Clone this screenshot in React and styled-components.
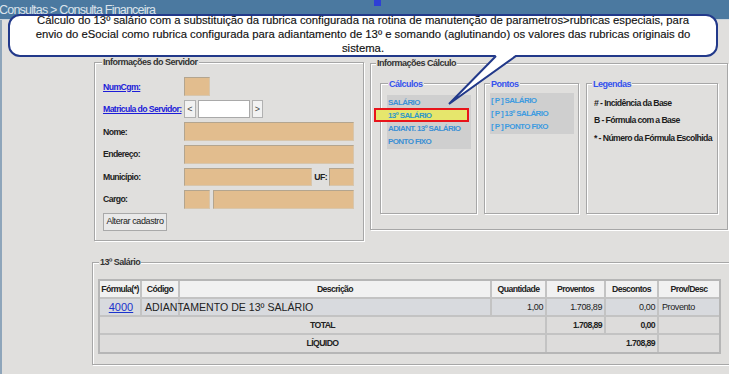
import React from "react";
import styled, { createGlobalStyle } from "styled-components";

const SANS = `"Liberation Sans", Arial, sans-serif`;
const BG = "#e0dfdd";

const Global = createGlobalStyle`
  html, body { margin: 0; padding: 0; background: ${BG}; overflow: hidden; }
  body { width: 729px; height: 374px; font-family: ${SANS}; }
  *, *::before, *::after { box-sizing: border-box; }
`;

const Page = styled.div`
  position: relative;
  width: 729px;
  height: 374px;
  overflow: hidden;
  background: ${BG};
`;

const TopBar = styled.header`
  height: 20px;
  background: #4b79a0;
  border-bottom: 1px solid #c9d2da;
  display: grid;
  grid-template-columns: 374px 7px;
  align-items: start;
`;

const Crumb = styled.div`
  margin-left: -1px;
  padding-top: 2px;
  white-space: nowrap;
  color: #dce4ec;
  font: 12.5px/16px ${SANS};
  letter-spacing: -0.8px;
`;

const Marker = styled.span`
  display: block;
  width: 7px;
  height: 6px;
  background: #2e3fd6;
`;

const Main = styled.main`
  border-left: 2px solid #8ea5ba;
  height: 354px;
  padding: 36px 0 0 90px;
`;

const TopRow = styled.div`
  display: flex;
  align-items: flex-start;
  gap: 6px;
  margin-left: 2px;
`;

const Group = styled.fieldset`
  margin: 0;
  padding: 0;
  min-width: 0;
  width: ${(p) => p.$w}px;
  ${(p) => (p.$mt ? `margin-top: ${p.$mt}px;` : "")}
  border: 1px solid #a7a7a7;
  box-shadow: 1px 1px 0 #fff, inset 1px 1px 0 #fff;
`;

const Legend = styled.legend`
  margin-left: ${(p) => p.$ml}px;
  padding: 0 1px;
  background: ${BG};
  font: bold 9px/12px ${SANS};
  letter-spacing: -0.5px;
  color: ${(p) => (p.$blue ? "#3552ee" : "#333")};
  white-space: nowrap;
`;

const ServerBody = styled.div`
  padding: 9px 9px 9px 8px;
  display: grid;
  grid-template-columns: 81px 1fr;
  grid-auto-rows: 19px;
  row-gap: 3.5px;
  align-items: center;
`;

const Label = styled.span`
  font: bold 8.7px/12px ${SANS};
  letter-spacing: -0.6px;
  color: ${(p) => (p.$link ? "#1c1cd8" : "#222")};
  text-decoration: ${(p) => (p.$link ? "underline" : "none")};
  white-space: nowrap;
`;

const Controls = styled.div`
  display: flex;
  align-items: center;
  gap: ${(p) => p.$gap ?? 2}px;
  height: 19px;
`;

const TanBox = styled.div`
  height: ${(p) => p.$h || 19}px;
  ${(p) => (p.$w ? `width: ${p.$w}px; flex: none;` : "flex: 1;")}
  background: #e2bd8e;
  border: 1px solid #b3a58f;
  border-right-color: #d8c6ac;
  border-bottom-color: #d8c6ac;
`;

const WhiteBox = styled.div`
  width: 52px;
  height: 18px;
  background: #fff;
  border: 1px solid #a9a9a9;
`;

const ArrowBtn = styled.span`
  width: ${(p) => p.$w}px;
  height: 18px;
  display: flex;
  align-items: center;
  justify-content: center;
  background: #f2f2f2;
  border: 1px solid #b1b1b1;
  font: 9px/1 ${SANS};
  color: #444;
`;

const Uf = styled.span`
  font: bold 8.7px/12px ${SANS};
  letter-spacing: -0.6px;
  color: #222;
`;

const Button = styled.button`
  grid-column: 1 / span 2;
  justify-self: start;
  width: 64px;
  height: 18px;
  padding: 0;
  background: #e9e9e9;
  border: 1px solid #a9a9a9;
  font: 9px/1 ${SANS};
  letter-spacing: -0.4px;
  color: #222;
  white-space: nowrap;
`;

const CalcBody = styled.div`
  display: flex;
  gap: 7px;
  padding: 8.5px 9px 15px 9px;
`;

const Inner = styled.fieldset`
  margin: 0;
  padding: 0;
  min-width: 0;
  width: ${(p) => p.$w}px;
  height: 136.5px;
  border: 1px solid #a7a7a7;
  box-shadow: 1px 1px 0 #fff, inset 1px 1px 0 #fff;
`;

const List = styled.ul`
  list-style: none;
  margin: ${(p) => p.$mt}px 0 0 ${(p) => p.$ml}px;
  width: 84px;
  padding: 1px 0;
  background: #cfcfcf;
`;

const Item = styled.li`
  position: relative;
  height: 13px;
  padding-left: 1px;
  font: bold 8px/13px ${SANS};
  letter-spacing: -0.6px;
  color: ${(p) => p.$color || "#3c8fd4"};
  white-space: nowrap;
`;

const ItemText = styled.span`
  position: relative;
  z-index: 1;
`;

const Highlight = styled.span`
  position: absolute;
  left: -13px;
  right: 2px;
  top: -1px;
  bottom: 0;
  background: #e6e66c;
  border: 2px solid #e8141a;
`;

const LegendList = styled.ul`
  list-style: none;
  margin: 5px 0 0 7px;
  padding: 0;
`;

const LegendItem = styled.li`
  height: 17.5px;
  font: bold 8.7px/17.5px ${SANS};
  letter-spacing: -0.6px;
  color: #1c1c1c;
  white-space: nowrap;
`;

const Bottom = styled.fieldset`
  margin: 15px 0 0 0;
  padding: 11px 0 10px 5px;
  min-width: 0;
  width: 660px;
  border: 1px solid #a7a7a7;
  box-shadow: 1px 1px 0 #fff, inset 1px 1px 0 #fff;
`;

const Table = styled.table`
  table-layout: fixed;
  border-collapse: separate;
  border-spacing: 0;
  width: 623px;
  border: 2px solid #b6b6b6;
`;

const Th = styled.th`
  width: ${(p) => p.$w}px;
  height: 18px;
  padding: 0;
  background: #f1f1f1;
  border-right: 2px solid #c3c3c3;
  border-bottom: 2px solid #c3c3c3;
  font: bold 8.7px/1 ${SANS};
  letter-spacing: -0.6px;
  color: #222;
  text-align: center;
  white-space: nowrap;
  &:last-child { border-right: 0; }
`;

const Tr = styled.tr`
  background: ${(p) => p.$bg};
  &:last-child td { border-bottom: 0; height: 17px; }
`;

const Td = styled.td`
  height: 18px;
  padding: 0 ${(p) => (p.$align === "right" ? 2 : 3)}px;
  border-right: 2px solid #c3c3c3;
  border-bottom: 2px solid #c3c3c3;
  text-align: ${(p) => p.$align || "left"};
  font: ${(p) => (p.$bold ? `bold 8.7px/1 ${SANS}` : `9px/1 ${SANS}`)};
  letter-spacing: ${(p) => (p.$bold ? "-0.6px" : "-0.4px")};
  color: #222;
  white-space: nowrap;
  overflow: visible;
  &:last-child { border-right: 0; }
`;

const WideText = styled.span`
  font: 10.6px/1 ${SANS};
  letter-spacing: 0;
  color: #222;
`;

const CodeLink = styled.a`
  color: #1a33cc;
  text-decoration: underline;
  font: 11px/1 ${SANS};
  letter-spacing: 0;
  margin-left: 2px;
`;

const Callout = styled.div`
  position: absolute;
  left: 8px;
  top: 14px;
  width: 710px;
  height: 43px;
  background: #fff;
  border: 2px solid #22398a;
  border-radius: 12px;
  z-index: 5;
`;

const CalloutText = styled.p`
  margin: -3px 0 0;
  text-align: center;
  font: 11.3px/14px ${SANS};
  color: #111;
  -webkit-text-stroke: 0.15px #111;
`;

const Tail = styled.svg`
  position: absolute;
  left: 440px;
  top: 50px;
  z-index: 6;
`;

const cols = [
  ["Fórmula(*)", 42],
  ["Código", 38],
  ["Descrição", 312],
  ["Quantidade", 55],
  ["Proventos", 59],
  ["Descontos", 53],
  ["Prov/Desc", 60],
];

export default function App() {
  return (
    <Page>
      <Global />
      <TopBar>
        <Crumb>Consultas &gt; Consulta Financeira</Crumb>
        <Marker />
      </TopBar>
      <Main>
        <TopRow>
          <Group $w={270}>
            <Legend $ml={7}>Informações do Servidor</Legend>
            <ServerBody>
              <Label $link>NumCgm:</Label>
              <Controls>
                <TanBox $w={26} />
              </Controls>
              <Label $link>Matricula do Servidor:</Label>
              <Controls>
                <ArrowBtn $w={12}>&lt;</ArrowBtn>
                <WhiteBox />
                <ArrowBtn $w={11}>&gt;</ArrowBtn>
              </Controls>
              <Label>Nome:</Label>
              <Controls>
                <TanBox />
              </Controls>
              <Label>Endereço:</Label>
              <Controls>
                <TanBox />
              </Controls>
              <Label>Município:</Label>
              <Controls>
                <TanBox $h={18} />
                <Uf>UF:</Uf>
                <TanBox $w={25} $h={18} />
              </Controls>
              <Label>Cargo:</Label>
              <Controls $gap={3}>
                <TanBox $w={26} />
                <TanBox />
              </Controls>
              <Button>Alterar cadastro</Button>
            </ServerBody>
          </Group>

          <Group $w={358} $mt={1}>
            <Legend $ml={5}>Informações Cálculo</Legend>
            <CalcBody>
              <Inner $w={97}>
                <Legend $ml={7} $blue>Cálculos</Legend>
                <List $mt={5.5} $ml={6}>
                  <Item><ItemText>SALÁRIO</ItemText></Item>
                  <Item $color="#2f97c8">
                    <Highlight />
                    <ItemText>13º SALÁRIO</ItemText>
                  </Item>
                  <Item><ItemText>ADIANT. 13º SALÁRIO</ItemText></Item>
                  <Item><ItemText>PONTO FIXO</ItemText></Item>
                </List>
              </Inner>
              <Inner $w={95}>
                <Legend $ml={5} $blue>Pontos</Legend>
                <List $mt={3.5} $ml={5}>
                  <Item $color="#3d9be0"><ItemText>[ P ] SALÁRIO</ItemText></Item>
                  <Item $color="#3d9be0"><ItemText>[ P ] 13º SALÁRIO</ItemText></Item>
                  <Item $color="#3d9be0"><ItemText>[ P ] PONTO FIXO</ItemText></Item>
                </List>
              </Inner>
              <Inner $w={132}>
                <Legend $ml={5} $blue>Legendas</Legend>
                <LegendList>
                  <LegendItem># - Incidência da Base</LegendItem>
                  <LegendItem>B - Fórmula com a Base</LegendItem>
                  <LegendItem>* - Número da Fórmula Escolhida</LegendItem>
                </LegendList>
              </Inner>
            </CalcBody>
          </Group>
        </TopRow>

        <Bottom>
          <Legend $ml={1}>13º Salário</Legend>
          <Table>
            <thead>
              <tr>
                {cols.map(([t, w]) => (
                  <Th key={t} $w={w}>{t}</Th>
                ))}
              </tr>
            </thead>
            <tbody>
              <Tr $bg="#d8dade">
                <Td $align="center"><CodeLink>4000</CodeLink></Td>
                <Td><WideText>ADIANTAMENTO DE 13º SALÁRIO</WideText></Td>
                <Td />
                <Td $align="right">1,00</Td>
                <Td $align="right">1.708,89</Td>
                <Td $align="right">0,00</Td>
                <Td>Provento</Td>
              </Tr>
              <Tr $bg="#dddcdb">
                <Td colSpan={4} $align="center" $bold>TOTAL</Td>
                <Td $align="right" $bold>1.708,89</Td>
                <Td $align="right" $bold>0,00</Td>
                <Td />
              </Tr>
              <Tr $bg="#dddcdb">
                <Td colSpan={4} $align="center" $bold>LÍQUIDO</Td>
                <Td colSpan={2} $align="right" $bold>1.708,89</Td>
                <Td />
              </Tr>
            </tbody>
          </Table>
        </Bottom>
      </Main>

      <Callout>
        <CalloutText>
          Cálculo do 13º salário com a substituição da rubrica configurada na rotina de manutenção de parametros&gt;rubricas especiais, para
          <br />
          envio do eSocial como rubrica configurada para adiantamento de 13º e somando (aglutinando) os valores das rubricas originais do
          <br />
          sistema.
        </CalloutText>
      </Callout>
      <Tail width="90" height="60" viewBox="0 0 90 60">
        <polygon points="57,4 9,54 77,4" fill="#fff" />
        <polyline points="56,6 9,54 76,6" fill="none" stroke="#22398a" strokeWidth="2" strokeLinejoin="miter" />
      </Tail>
    </Page>
  );
}
